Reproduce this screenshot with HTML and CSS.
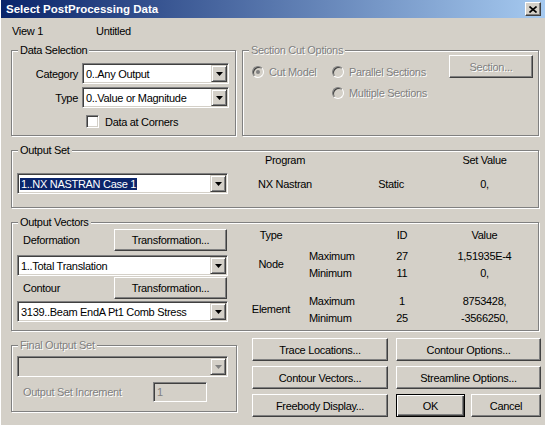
FILE: index.html
```html
<!DOCTYPE html>
<html>
<head>
<meta charset="utf-8">
<link rel="stylesheet" href="styles.css">
</head>
<body>
<div class="window">
  <div class="titlebar">
    <span class="title">Select PostProcessing Data</span>
    <span class="close"><svg width="8" height="7" viewBox="0 0 8 7"><path d="M0.5 0.5L7.5 6.5M7.5 0.5L0.5 6.5" stroke="#000" stroke-width="1.6" fill="none"/></svg></span>
  </div>
  <div class="content">
    <div class="viewrow"><span class="view">View 1</span><span>Untitled</span></div>

    <div class="row1">
      <div class="group ds">
        <span class="legend">Data Selection</span>
        <div class="ds-grid">
          <span class="lbl-r">Category</span>
          <div class="combo"><span class="combo-text">0..Any Output</span><span class="drop"><svg width="7" height="4" viewBox="0 0 7 4"><path d="M0 0H7L3.5 4Z" fill="#000"/></svg></span></div>
          <span class="lbl-r">Type</span>
          <div class="combo"><span class="combo-text">0..Value or Magnitude</span><span class="drop"><svg width="7" height="4" viewBox="0 0 7 4"><path d="M0 0H7L3.5 4Z" fill="#000"/></svg></span></div>
          <span></span>
          <div class="check-row"><span class="checkbox"></span><span>Data at Corners</span></div>
        </div>
      </div>

      <div class="group sc">
        <span class="legend dis">Section Cut Options</span>
        <div class="sc-inner">
          <div class="radios">
            <div class="radio-item"><span class="radio checked"><span class="dot"></span></span><span class="dis">Cut Model</span></div>
            <div class="radio-item"><span class="radio"></span><span class="dis">Parallel Sections</span></div>
            <span></span>
            <div class="radio-item"><span class="radio"></span><span class="dis">Multiple Sections</span></div>
          </div>
          <div class="btn section-btn"><span class="dis">Section...</span></div>
        </div>
      </div>
    </div>

    <div class="group os">
      <span class="legend">Output Set</span>
      <div class="os-grid">
        <span></span>
        <span class="c">Program</span>
        <span></span>
        <span class="c">Set Value</span>
        <div class="combo focus"><span class="combo-text"><span class="sel">1..NX NASTRAN Case 1</span></span><span class="drop"><svg width="7" height="4" viewBox="0 0 7 4"><path d="M0 0H7L3.5 4Z" fill="#000"/></svg></span></div>
        <span class="c">NX Nastran</span>
        <span class="c">Static</span>
        <span class="c">0,</span>
      </div>
    </div>

    <div class="group ov">
      <span class="legend">Output Vectors</span>
      <div class="ov-inner">
        <div class="ov-left">
          <div class="ov-row"><span class="ov-lbl">Deformation</span><div class="btn tbtn">Transformation...</div></div>
          <div class="combo c1"><span class="combo-text">1..Total Translation</span><span class="drop"><svg width="7" height="4" viewBox="0 0 7 4"><path d="M0 0H7L3.5 4Z" fill="#000"/></svg></span></div>
          <div class="ov-row r2"><span class="ov-lbl">Contour</span><div class="btn tbtn">Transformation...</div></div>
          <div class="combo c2"><span class="combo-text">3139..Beam EndA Pt1 Comb Stress</span><span class="drop"><svg width="7" height="4" viewBox="0 0 7 4"><path d="M0 0H7L3.5 4Z" fill="#000"/></svg></span></div>
        </div>
        <div class="ov-right">
          <div class="ov-head">
            <span class="c">Type</span><span></span><span class="c">ID</span><span class="c">Value</span>
          </div>
          <div class="ov-body">
            <span class="c span2">Node</span><span class="l">Maximum</span><span class="c">27</span><span class="c">1,51935E-4</span>
            <span class="l">Minimum</span><span class="c">11</span><span class="c">0,</span>
            <span class="spacer"></span>
            <span class="c span2">Element</span><span class="l">Maximum</span><span class="c">1</span><span class="c">8753428,</span>
            <span class="l">Minimum</span><span class="c">25</span><span class="c">-3566250,</span>
          </div>
        </div>
      </div>
    </div>

    <div class="bottom">
      <div class="group fo">
        <span class="legend dis">Final Output Set</span>
        <div class="fo-inner">
          <div class="combo disabled"><span class="combo-text"></span><span class="drop"><svg width="7" height="4" viewBox="0 0 7 4"><path d="M0 0H7L3.5 4Z" fill="#808080"/></svg></span></div>
          <div class="inc-row"><span class="dis inc-lbl">Output Set Increment</span><span class="field"><span class="dis2">1</span></span></div>
        </div>
      </div>
      <div class="buttons">
        <div class="btn">Trace Locations...</div>
        <div class="btn">Contour Options...</div>
        <div class="btn">Contour Vectors...</div>
        <div class="btn">Streamline Options...</div>
        <div class="btn">Freebody Display...</div>
        <div class="okcancel"><div class="btn default ok">OK</div><div class="btn cancel">Cancel</div></div>
      </div>
    </div>
  </div>
</div>
</body>
</html>
```

FILE: styles.css
```css
* { box-sizing: border-box; }
html, body { margin: 0; padding: 0; }
body {
  width: 545px; height: 425px; overflow: hidden;
  background: #d4d0c8;
  font-family: "Liberation Sans", Arial, sans-serif;
  font-size: 11px; letter-spacing: -0.3px; color: #000;
}
.window {
  width: 545px; height: 425px; background: #d4d0c8;
  border-left: 1px solid #fff;
}
.titlebar {
  height: 18px;
  background: linear-gradient(to right, #0a246a, #a6caf0);
  display: flex; align-items: center;
  padding: 0 4px 0 5px;
}
.title { flex: 1; color: #fff; font-weight: bold; font-size: 11.5px; letter-spacing: 0; }
.close {
  width: 16px; height: 14px; background: #d4d0c8;
  border: 1px solid; border-color: #fff #404040 #404040 #fff;
  box-shadow: inset -1px -1px 0 #808080;
  display: flex; align-items: center; justify-content: center;
}
.content { padding-left: 10px; }
.viewrow { display: flex; height: 14px; line-height: 14px; margin-top: 6px; padding-left: 1px; }
.view { width: 84px; }

.group {
  position: relative;
  border: 1px solid #808080;
  box-shadow: 1px 1px 0 #fff, inset 1px 1px 0 #fff;
}
.legend {
  position: absolute; top: -7px; left: 6px;
  padding: 0 2px; line-height: 13px; background: #d4d0c8;
}
.dis { color: #808080; text-shadow: 1px 1px 0 #fff; }
.dis2 { color: #808080; }

.row1 { display: flex; gap: 6px; margin-top: 12px; }
.ds { width: 225px; height: 86px; }
.sc { width: 297px; height: 86px; }
.ds-grid {
  display: grid; grid-template-columns: 66px 147px; grid-template-rows: 21px 21px auto;
  column-gap: 4px; row-gap: 3px; padding-top: 12px;
}
.lbl-r { text-align: right; align-self: center; }

.combo {
  display: flex; height: 21px; background: #fff;
  border: 1px solid; border-color: #808080 #fff #fff #808080;
  box-shadow: inset 1px 1px 0 #404040, inset -1px -1px 0 #d4d0c8;
  padding: 1px;
}
.combo-text { flex: 1; display: flex; align-items: center; padding-left: 2px; white-space: nowrap; overflow: hidden; }
.combo.focus .combo-text { padding-left: 1px; }
.sel { background: #0a246a; color: #fff; padding: 0 1px; line-height: 12px; }
.drop {
  width: 16px; height: 17px; background: #d4d0c8;
  border: 1px solid; border-color: #d4d0c8 #404040 #404040 #d4d0c8;
  box-shadow: inset 1px 1px 0 #fff, inset -1px -1px 0 #808080;
  display: flex; align-items: center; justify-content: center;
}
.combo.disabled { background: #d4d0c8; }

.check-row { display: flex; align-items: center; gap: 6px; margin: 4px 0 0 4px; }
.checkbox {
  width: 13px; height: 13px; background: #fff;
  border: 1px solid; border-color: #808080 #fff #fff #808080;
  box-shadow: inset 1px 1px 0 #404040, inset -1px -1px 0 #d4d0c8;
}

.sc-inner { display: flex; align-items: flex-start; padding: 4px 5px 0 9px; }
.radios { display: grid; grid-template-columns: 80px auto; grid-template-rows: 21px 21px; margin-top: 6px; }
.radio-item { display: flex; align-items: center; gap: 5px; }
.radio {
  width: 12px; height: 12px; border-radius: 50%; background: #d4d0c8;
  border: 1px solid; border-color: #808080 #fff #fff #808080;
  box-shadow: inset 1px 1px 0 #404040, inset -1px -1px 0 #d4d0c8;
  display: flex; align-items: center; justify-content: center;
}
.dot { width: 4px; height: 4px; border-radius: 50%; background: #808080; }

.btn {
  display: flex; align-items: center; justify-content: center;
  background: #d4d0c8; height: 23px;
  border: 1px solid; border-color: #fff #404040 #404040 #fff;
  box-shadow: inset -1px -1px 0 #808080;
  white-space: nowrap;
}
.section-btn { width: 84px; margin-left: auto; }

.os { width: 528px; height: 58px; margin-top: 14px; }
.os-grid {
  display: grid; grid-template-columns: 211px 114px 98px 89px; grid-template-rows: 18px 21px;
  row-gap: 4px; padding-left: 5px;
}
.c { text-align: center; align-self: center; }
.l { align-self: center; padding-left: 7px; }

.ov { width: 528px; height: 109px; margin-top: 14px; }
.ov-inner { display: flex; align-items: flex-start; padding: 3px 0 0 5px; }
.ov-left { width: 211px; margin-top: 3px; display: flex; flex-direction: column; }
.ov-row { display: flex; align-items: center; height: 22px; }
.ov-lbl { flex: 1; padding-left: 6px; }
.tbtn { width: 113px; height: 22px; margin-right: 1px; }
.c1 { margin-top: 4px; }
.r2 { margin-top: 1px; }
.c2 { margin-top: 2px; }
.ov-right { margin-left: 12px; display: flex; flex-direction: column; }
.ov-head {
  display: grid; grid-template-columns: 62px 58px 84px 81px; grid-template-rows: 17px;
}
.ov-body {
  margin-top: 4px;
  display: grid; grid-template-columns: 62px 58px 84px 81px;
  grid-template-rows: 17px 17px 11px 17px 17px;
}
.ov-body .span2 { grid-row: span 2; }
.ov-body .spacer { grid-column: 1 / -1; }

.bottom { display: flex; align-items: flex-start; margin-top: 7px; }
.fo { width: 226px; height: 67px; margin-top: 7px; }
.fo-inner { padding: 10px 0 0 5px; }
.fo .combo { width: 211px; }
.inc-row { display: flex; align-items: center; margin-top: 5px; }
.inc-lbl { width: 136px; padding-left: 6px; }
.field {
  width: 54px; height: 20px; background: #d4d0c8;
  border: 1px solid; border-color: #808080 #fff #fff #808080;
  box-shadow: inset 1px 1px 0 #404040, inset -1px -1px 0 #d4d0c8;
  display: flex; align-items: center; padding-left: 3px;
}
.buttons {
  margin-left: 15px;
  display: grid; grid-template-columns: 136px 145px; grid-template-rows: 23px 23px 23px;
  column-gap: 8px; row-gap: 5px;
}
.okcancel { display: flex; gap: 6px; }
.ok { width: 69px; }
.cancel { flex: 1; }
.btn.default {
  border: 1px solid #000;
  box-shadow: inset 1px 1px 0 #fff, inset -1px -1px 0 #404040, inset -2px -2px 0 #808080;
}
```
